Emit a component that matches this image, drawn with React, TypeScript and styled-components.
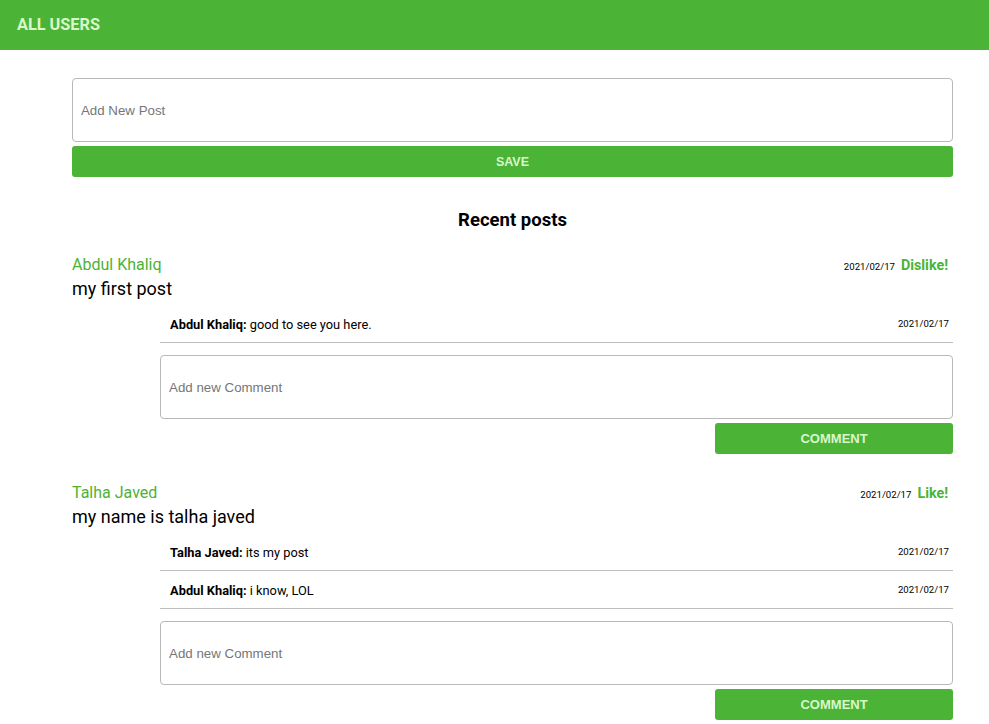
import React from "react";
import styled, { createGlobalStyle } from "styled-components";

const GREEN = "#4bb336";
const PALE = "#d9f8c9";

const Global = createGlobalStyle`
  html, body { margin: 0; padding: 0; background: #fff; }
  body { font-family: Roboto, "Liberation Sans", sans-serif; color: #000; }
  * { box-sizing: border-box; }
`;

const Header = styled.header`
  height: 50px;
  background: ${GREEN};
  display: flex;
  align-items: center;
  padding: 0 0 1px 17px;
`;

const HeaderTitle = styled.div`
  font-family: Roboto, sans-serif;
  font-weight: 700;
  font-size: 16.3px;
  color: ${PALE};
`;

const Main = styled.main`
  padding: 28px 36px 0 72px;
  display: flex;
  flex-direction: column;
`;

const TextBox = styled.input`
  display: block;
  width: 100%;
  height: 64px;
  border: 1px solid #b8b8b8;
  border-radius: 4px;
  padding: 0 8px;
  font-family: "Liberation Sans", Arial, sans-serif;
  font-size: 13.3px;
  color: #333;
  outline: none;
  &::placeholder { color: #767676; }
`;

const GreenButton = styled.button<{ $narrow?: boolean }>`
  display: block;
  margin-top: 4px;
  height: 31px;
  width: ${(p) => (p.$narrow ? "30%" : "100%")};
  align-self: flex-end;
  background: ${GREEN};
  border: none;
  border-radius: 3px;
  color: ${PALE};
  font-family: "Liberation Sans", Arial, sans-serif;
  font-weight: 700;
  font-size: ${(p) => (p.$narrow ? "13px" : "12.5px")};
  cursor: pointer;
`;

const Title = styled.h2`
  margin: 32px 0 0;
  text-align: center;
  font-size: 18.5px;
  line-height: 22px;
  font-weight: 700;
`;

const Post = styled.section<{ $first?: boolean }>`
  margin-top: ${(p) => (p.$first ? "23px" : "28px")};
  display: flex;
  flex-direction: column;
`;

const PostHead = styled.div`
  display: flex;
  justify-content: space-between;
  align-items: center;
  height: 22px;
  padding-right: 5px;
`;

const Author = styled.div`
  color: ${GREEN};
  font-size: 16px;
  line-height: 22px;
`;

const Meta = styled.div`
  display: flex;
  align-items: baseline;
  gap: 6px;
`;

const SmallDate = styled.span`
  font-size: 9.6px;
  color: #000;
`;

const Reaction = styled.span`
  color: ${GREEN};
  font-weight: 700;
  font-size: 14.3px;
  cursor: pointer;
`;

const PostText = styled.div`
  font-size: 18px;
  line-height: 25px;
`;

const Comments = styled.div`
  margin-left: 10%;
  margin-top: 4px;
  display: flex;
  flex-direction: column;
`;

const CommentRow = styled.div`
  height: 38px;
  border-bottom: 1px solid #bdbdbd;
  display: flex;
  justify-content: space-between;
  align-items: center;
  padding: 2px 4px 0 10px;
  font-size: 12.8px;
`;

const CommentDate = styled.span`
  font-size: 9.6px;
  margin-top: -3px;
`;

const CommentInput = styled(TextBox)`
  margin-top: 12px;
`;

type Comment = { who: string; text: string; date: string };
type PostData = { author: string; text: string; date: string; reaction: string; comments: Comment[] };

const posts: PostData[] = [
  {
    author: "Abdul Khaliq",
    text: "my first post",
    date: "2021/02/17",
    reaction: "Dislike!",
    comments: [{ who: "Abdul Khaliq", text: "good to see you here.", date: "2021/02/17" }],
  },
  {
    author: "Talha Javed",
    text: "my name is talha javed",
    date: "2021/02/17",
    reaction: "Like!",
    comments: [
      { who: "Talha Javed", text: "its my post", date: "2021/02/17" },
      { who: "Abdul Khaliq", text: "i know, LOL", date: "2021/02/17" },
    ],
  },
];

export default function App() {
  return (
    <>
      <Global />
      <Header>
        <HeaderTitle>ALL USERS</HeaderTitle>
      </Header>
      <Main>
        <TextBox placeholder="Add New Post" />
        <GreenButton>SAVE</GreenButton>
        <Title>Recent posts</Title>
        {posts.map((p, i) => (
          <Post key={i} $first={i === 0}>
            <PostHead>
              <Author>{p.author}</Author>
              <Meta>
                <SmallDate>{p.date}</SmallDate>
                <Reaction>{p.reaction}</Reaction>
              </Meta>
            </PostHead>
            <PostText>{p.text}</PostText>
            <Comments>
              {p.comments.map((c, j) => (
                <CommentRow key={j}>
                  <span>
                    <b>{c.who}:</b> {c.text}
                  </span>
                  <CommentDate>{c.date}</CommentDate>
                </CommentRow>
              ))}
              <CommentInput placeholder="Add new Comment" />
              <GreenButton $narrow>COMMENT</GreenButton>
            </Comments>
          </Post>
        ))}
      </Main>
    </>
  );
}
